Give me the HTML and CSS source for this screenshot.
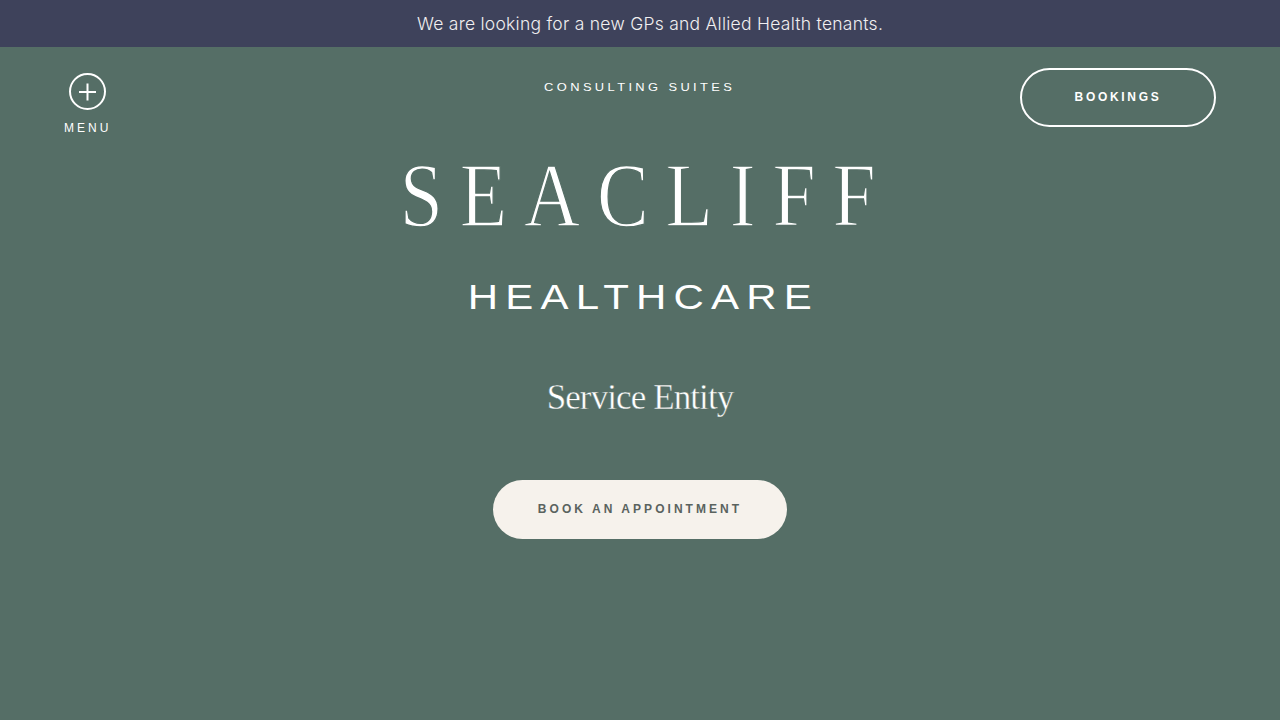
FILE: index.html
```html
<!DOCTYPE html>
<html lang="en">
<head>
<meta charset="utf-8">
<title>Seacliff Healthcare</title>
<link rel="stylesheet" href="styles.css">
</head>
<body>
<div class="notice">We are looking for a new GPs and Allied Health tenants.</div>
<main class="hero">
  <button class="menu" type="button">
    <svg class="menu-icon" viewBox="0 0 37 37" width="37" height="37" aria-hidden="true">
      <circle cx="18.5" cy="18.5" r="17.5" fill="none" stroke="#fff" stroke-width="2"/>
      <path d="M10 19H27M18.5 10.5V27.5" fill="none" stroke="#fff" stroke-width="2"/>
    </svg>
    <span class="menu-label">MENU</span>
  </button>
  <div class="centre">
    <p class="eyebrow">CONSULTING SUITES</p>
    <h1 class="logo">
      <span class="logo-main">SEACLIFF</span>
      <span class="logo-sub">HEALTHCARE</span>
    </h1>
    <p class="entity">Service Entity</p>
    <a class="cta" href="#">BOOK AN APPOINTMENT</a>
  </div>
  <a class="bookings" href="#">BOOKINGS</a>
</main>
</body>
</html>
```
FILE: styles.css
```css
* { box-sizing: border-box; }
html, body { margin: 0; height: 100%; }
body {
  background: #556e66;
  color: #fff;
  font-family: "Liberation Sans", sans-serif;
  overflow: hidden;
}
.notice {
  height: 47px;
  padding-left: 20px;
  background: #3e425b;
  color: #f1eff0;
  font-family: "Inter", sans-serif;
  font-weight: 300;
  font-size: 17.5px;
  line-height: 47px;
  letter-spacing: 0.26px;
  text-align: center;
}
.hero {
  display: grid;
  grid-template-columns: 1fr auto 1fr;
  padding: 21px 64px 0;
  align-items: start;
}
.menu {
  justify-self: start;
  display: flex;
  flex-direction: column;
  align-items: center;
  margin-top: 5px;
  padding: 0;
  background: none;
  border: 0;
  color: #fff;
}
.menu-label {
  margin-top: 11px;
  font-family: "Liberation Sans", sans-serif;
  font-size: 12px;
  line-height: 14px;
  letter-spacing: 3px;
}
.centre {
  display: flex;
  flex-direction: column;
  align-items: center;
}
.eyebrow {
  margin: 12px 0 0;
  font-family: "Liberation Sans", sans-serif;
  font-size: 11px;
  line-height: 14px;
  letter-spacing: 2.9px;
  transform: scaleX(1.17);
}
.logo {
  display: flex;
  flex-direction: column;
  align-items: center;
  margin: 0;
  font-weight: 400;
}
.logo-main {
  margin: 54px -13px 0 0;
  font-family: "Liberation Serif", serif;
  font-size: 92px;
  line-height: 94px;
  letter-spacing: 20px;
  transform: scaleX(0.843);
  -webkit-text-stroke: 1.4px #556e66;
}
.logo-sub {
  margin: 35px -6px 0 0;
  font-family: "Liberation Sans", sans-serif;
  font-size: 35px;
  line-height: 40px;
  letter-spacing: 6px;
  transform: scaleX(1.2);
}
.entity {
  margin: 61px 0 0;
  font-family: "Liberation Serif", serif;
  font-size: 35px;
  line-height: 40px;
  letter-spacing: -0.9px;
  -webkit-text-stroke: 0.4px #556e66;
}
.cta {
  margin-top: 62px;
  width: 294px;
  height: 59px;
  border-radius: 30px;
  background: #f6f2ec;
  color: #5a635f;
  font-family: "Liberation Sans", sans-serif;
  font-weight: 700;
  font-size: 12px;
  line-height: 59px;
  letter-spacing: 3.05px;
  text-align: center;
  text-decoration: none;
}
.bookings {
  justify-self: end;
  width: 196px;
  height: 59px;
  border: 2px solid #fff;
  border-radius: 30px;
  color: #fff;
  font-family: "Liberation Sans", sans-serif;
  font-weight: 700;
  font-size: 12px;
  line-height: 55px;
  letter-spacing: 2.7px;
  text-align: center;
  text-decoration: none;
}
```
